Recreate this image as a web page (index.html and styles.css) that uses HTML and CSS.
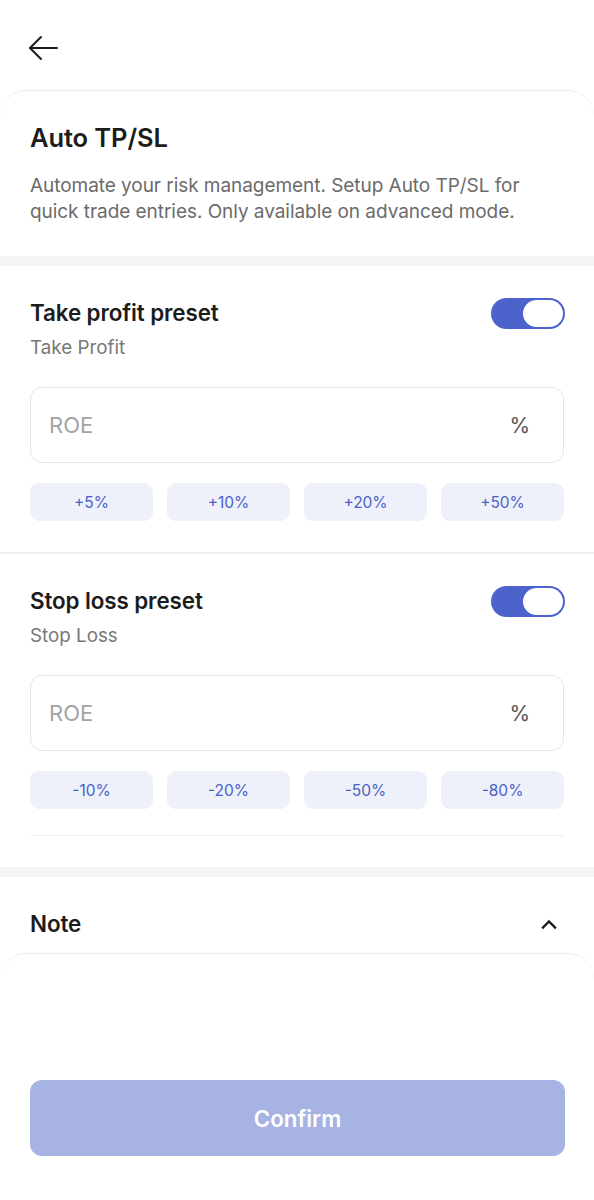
FILE: index.html
```html
<!DOCTYPE html>
<html>
<head>
<meta charset="utf-8">
<link rel="stylesheet" href="styles.css">
</head>
<body>
<div class="page">
  <header class="topbar">
    <svg class="back" width="30" height="26" viewBox="0 0 30 26" fill="none" stroke="#1c1c1c" stroke-width="2" stroke-linecap="round" stroke-linejoin="round">
      <path d="M29 13H2.5"/>
      <path d="M13 2L2 13l11 11"/>
    </svg>
  </header>

  <section class="card intro">
    <h1 class="title">Auto TP/SL</h1>
    <p class="desc">Automate your risk management. Setup Auto TP/SL for quick trade entries. Only available on advanced mode.</p>
  </section>

  <div class="band"></div>

  <section class="preset">
    <div class="preset-head">
      <div>
        <h2 class="ptitle">Take profit preset</h2>
        <div class="psub">Take Profit</div>
      </div>
      <div class="toggle"><span class="knob"></span></div>
    </div>
    <div class="field"><span class="ph">ROE</span><span class="unit">%</span></div>
    <div class="chips">
      <div class="chip">+5%</div>
      <div class="chip">+10%</div>
      <div class="chip">+20%</div>
      <div class="chip">+50%</div>
    </div>
  </section>

  <div class="rule"></div>

  <section class="preset sl">
    <div class="preset-head">
      <div>
        <h2 class="ptitle">Stop loss preset</h2>
        <div class="psub">Stop Loss</div>
      </div>
      <div class="toggle"><span class="knob"></span></div>
    </div>
    <div class="field"><span class="ph">ROE</span><span class="unit">%</span></div>
    <div class="chips">
      <div class="chip">-10%</div>
      <div class="chip">-20%</div>
      <div class="chip">-50%</div>
      <div class="chip">-80%</div>
    </div>
    <div class="inner-rule"></div>
  </section>

  <div class="band"></div>

  <section class="note">
    <h2 class="ptitle">Note</h2>
    <svg class="chev" width="18" height="12" viewBox="0 0 18 12" fill="none" stroke="#1c1c1c" stroke-width="2.4" stroke-linecap="square" stroke-linejoin="miter">
      <path d="M3 9.5L9 3.5l6 6"/>
    </svg>
  </section>

  <footer class="card sheet">
    <button class="confirm">Confirm</button>
  </footer>
</div>
</body>
</html>
```

FILE: styles.css
```css
* { box-sizing: border-box; margin: 0; padding: 0; }
html, body { background: #fff; }
body {
  font-family: Inter, "Noto Sans", "Liberation Sans", sans-serif;
  color: #1c1c1c;
  width: 594px;
  -webkit-font-smoothing: antialiased;
}
.page { display: flex; flex-direction: column; }

.topbar { height: 90px; padding: 35px 0 0 28px; }
.back { display: block; }

.card {
  border-top: 1.5px solid #ececec;
  border-radius: 26px 26px 0 0;
}

.intro { padding: 32px 30px 31px; }
.title { font-size: 25.5px; font-weight: 600; line-height: 30px; letter-spacing: -0.1px; }
.desc {
  margin-top: 20px;
  font-size: 19px;
  line-height: 26px;
  color: #6b6b6b;
  letter-spacing: -0.05px;
}

.band { height: 10px; background: #f5f5f5; }

.preset { padding: 33px 30px 31px; }
.preset-head { display: flex; justify-content: space-between; align-items: flex-start; }
.ptitle { font-size: 22.4px; font-weight: 600; line-height: 28px; letter-spacing: -0.1px; }
.psub { margin-top: 9px; font-size: 18.8px; line-height: 24px; color: #777; }

.toggle {
  width: 74px; height: 31px;
  margin-top: -1px;
  margin-right: -1px;
  border-radius: 16px;
  background: #4c63cc;
  display: flex; align-items: center; justify-content: flex-end;
  padding-right: 2px;
}
.knob { width: 40px; height: 27px; border-radius: 14px; background: #fff; }

.field {
  margin-top: 27px;
  height: 76px;
  border: 1.5px solid #e6e6e6;
  border-radius: 12px;
  display: flex; align-items: center; justify-content: space-between;
  padding: 0 33px 0 18px;
  font-size: 22px;
}
.ph { color: #a3a3a3; }
.unit { color: #555; font-size: 21px; }

.chips {
  margin-top: 20px;
  display: grid;
  grid-template-columns: repeat(4, 1fr);
  gap: 14px;
}
.chip {
  height: 38px;
  border-radius: 9px;
  background: #eef0fa;
  color: #4a5fc9;
  font-size: 15.5px;
  display: flex; align-items: center; justify-content: center;
}

.rule { height: 2px; background: #f0f0f0; }
.inner-rule { margin-top: 26px; height: 1px; background: #f0f0f0; }

.note {
  padding: 33px 36px 15px 30px;
  display: flex; justify-content: space-between; align-items: center;
}
.chev { display: block; }

.sheet { padding: 126px 29px 44px 30px; }
.confirm {
  width: 100%;
  height: 76px;
  border: none;
  border-radius: 12px;
  background: #a7b3e3;
  color: #fff;
  font-family: Inter, "Noto Sans", "Liberation Sans", sans-serif;
  font-size: 22.3px;
  font-weight: 600;
}
```
